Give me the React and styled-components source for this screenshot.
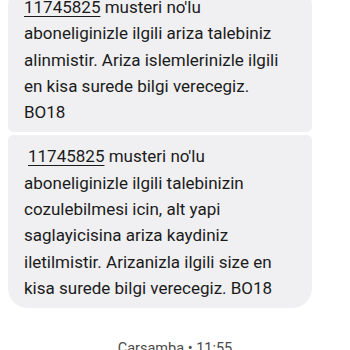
import styled, { createGlobalStyle } from "styled-components";

const Global = createGlobalStyle`
  html, body {
    margin: 0;
    background: #ffffff;
    overflow: hidden;
  }
`;

const Page = styled.div`
  display: flex;
  flex-direction: column;
  margin-top: -14px;
  font-family: Roboto, "Noto Sans", sans-serif;
`;

const Thread = styled.div`
  display: flex;
  flex-direction: column;
  gap: 3px;
  width: 304px;
  margin-left: 8px;
`;

const Bubble = styled.div`
  background: #f0f0f2;
  color: #1b1b1b;
  font-size: 17px;
  line-height: 26.3px;
  padding: 8px 22px 7px 16px;
  border-radius: ${(p) => (p.$first ? "20px 20px 5px 5px" : "5px 5px 20px 20px")};
`;

const Number = styled.span`
  text-decoration: underline;
  text-decoration-thickness: 1px;
  text-underline-offset: 3px;
  margin-left: ${(p) => p.$indent || 0}px;
`;

const Stamp = styled.div`
  text-align: center;
  font-size: 14.5px;
  color: #4a4a4a;
  margin-top: 32px;
`;

export default function App() {
  return (
    <>
      <Global />
      <Page>
        <Thread>
          <Bubble $first>
            <Number>11745825</Number> musteri no'lu aboneliginizle ilgili ariza talebiniz
            alinmistir. Ariza islemlerinizle ilgili en kisa surede bilgi verecegiz. BO18
          </Bubble>
          <Bubble>
            <Number $indent={4}>11745825</Number> musteri no'lu aboneliginizle ilgili
            talebinizin cozulebilmesi icin, alt yapi saglayicisina ariza kaydiniz
            iletilmistir. Arizanizla ilgili size en kisa surede bilgi verecegiz. BO18
          </Bubble>
        </Thread>
        <Stamp>Carsamba • 11:55</Stamp>
      </Page>
    </>
  );
}
